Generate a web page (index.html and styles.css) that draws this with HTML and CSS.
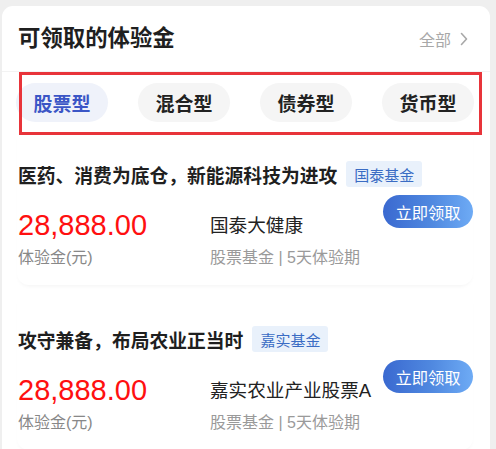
FILE: index.html
```html
<!DOCTYPE html>
<html lang="zh-CN">
<head>
<meta charset="utf-8">
<link rel="stylesheet" href="styles.css">
</head>
<body>
<div class="panel">
  <div class="header">
    <div class="title">可领取的体验金</div>
    <div class="more">全部<svg class="chev" width="8" height="14" viewBox="0 0 8 14"><polyline points="1.5,1.5 6.5,7 1.5,12.5" fill="none" stroke="#a8a8a8" stroke-width="1.6" stroke-linecap="round" stroke-linejoin="round"/></svg></div>
  </div>
  <div class="tabs">
    <div class="tab active">股票型</div>
    <div class="tab">混合型</div>
    <div class="tab">债券型</div>
    <div class="tab">货币型</div>
  </div>
  <div class="mark"></div>
  <div class="list">
    <div class="fund">
      <div class="fund-title">
        <span class="fund-name">医药、消费为底仓，新能源科技为进攻</span>
        <span class="tag">国泰基金</span>
      </div>
      <div class="fund-body">
        <div class="col-amount">
          <div class="amount">28,888.00</div>
          <div class="sub">体验金(元)</div>
        </div>
        <div class="col-info">
          <div class="product">国泰大健康</div>
          <div class="sub light">股票基金 | 5天体验期</div>
        </div>
        <div class="btn">立即领取</div>
      </div>
    </div>
    <div class="fund">
      <div class="fund-title">
        <span class="fund-name">攻守兼备，布局农业正当时</span>
        <span class="tag">嘉实基金</span>
      </div>
      <div class="fund-body">
        <div class="col-amount">
          <div class="amount">28,888.00</div>
          <div class="sub">体验金(元)</div>
        </div>
        <div class="col-info">
          <div class="product">嘉实农业产业股票A</div>
          <div class="sub light">股票基金 | 5天体验期</div>
        </div>
        <div class="btn">立即领取</div>
      </div>
    </div>
  </div>
</div>
</body>
</html>
```

FILE: styles.css
```css
* { box-sizing: border-box; }
html, body {
  margin: 0;
  padding: 0;
  background: #efefef;
  height: 449px;
  overflow: hidden;
}
body {
  font-family: "Liberation Sans", "Noto Sans CJK SC", sans-serif;
  color: #222;
}
.panel {
  position: relative;
  margin: 6px 6px 0 2px;
  background: #fff;
  border-radius: 11px 11px 0 0;
  height: 460px;
}
.header {
  height: 66px;
  display: flex;
  align-items: center;
  justify-content: space-between;
  padding: 0 22px 0 16px;
  border-bottom: 1px solid #f3f3f3;
}
.title {
  font-size: 22.4px;
  font-weight: 600;
  color: #1f1f1f;
  line-height: 30px;
}
.more {
  display: flex;
  align-items: center;
  gap: 9px;
  font-size: 16px;
  color: #a8a8a8;
}
.chev { display: block; }
.tabs {
  display: flex;
  gap: 30px;
  padding: 11px 0 12px 14px;
}
.tab {
  width: 92px;
  height: 39px;
  border-radius: 20px;
  background: #f5f5f5;
  display: flex;
  align-items: center;
  justify-content: center;
  font-size: 19px;
  font-weight: 600;
  color: #222;
}
.tab.active {
  background: #eff2fa;
  color: #3b56c6;
}
.mark {
  position: absolute;
  left: 17px;
  top: 66px;
  width: 463px;
  height: 63px;
  border: 3px solid #e8343a;
  pointer-events: none;
}
.list {
  padding: 0 17px 0 15px;
  display: flex;
  flex-direction: column;
  gap: 14px;
}
.fund {
  padding: 27px 0 16px 1px;
  border-radius: 0 0 12px 12px;
  box-shadow: 0 3px 4px -2px rgba(0, 0, 0, 0.05);
}
.fund-title {
  display: flex;
  align-items: center;
  height: 26px;
}
.fund-name {
  font-size: 18.8px;
  font-weight: 600;
  color: #1f1f1f;
  white-space: nowrap;
}
.tag {
  margin-left: 9px;
  height: 26px;
  padding: 0 8px;
  border-radius: 3px;
  background: #e9f1fb;
  color: #3a6cc4;
  font-size: 15px;
  display: flex;
  align-items: center;
}
.fund-body {
  display: flex;
  margin-top: 8px;
}
.col-amount {
  width: 192px;
  padding-top: 13px;
}
.amount {
  font-size: 29px;
  line-height: 34px;
  color: #ff1010;
}
.sub {
  margin-top: 5px;
  font-size: 16px;
  line-height: 22px;
  color: #888;
}
.sub.light { color: #9a9a9a; margin-top: 8px; }
.col-info {
  flex: 1;
  padding-top: 18px;
}
.product {
  font-size: 18.6px;
  line-height: 26px;
  color: #222;
}
.btn {
  width: 90px;
  height: 33px;
  border-radius: 17px;
  background: linear-gradient(90deg, #3a69d0 0%, #5089e0 55%, #6eabf5 100%);
  color: #fff;
  font-size: 16.3px;
  display: flex;
  align-items: center;
  justify-content: center;
  align-self: flex-start;
}
```
